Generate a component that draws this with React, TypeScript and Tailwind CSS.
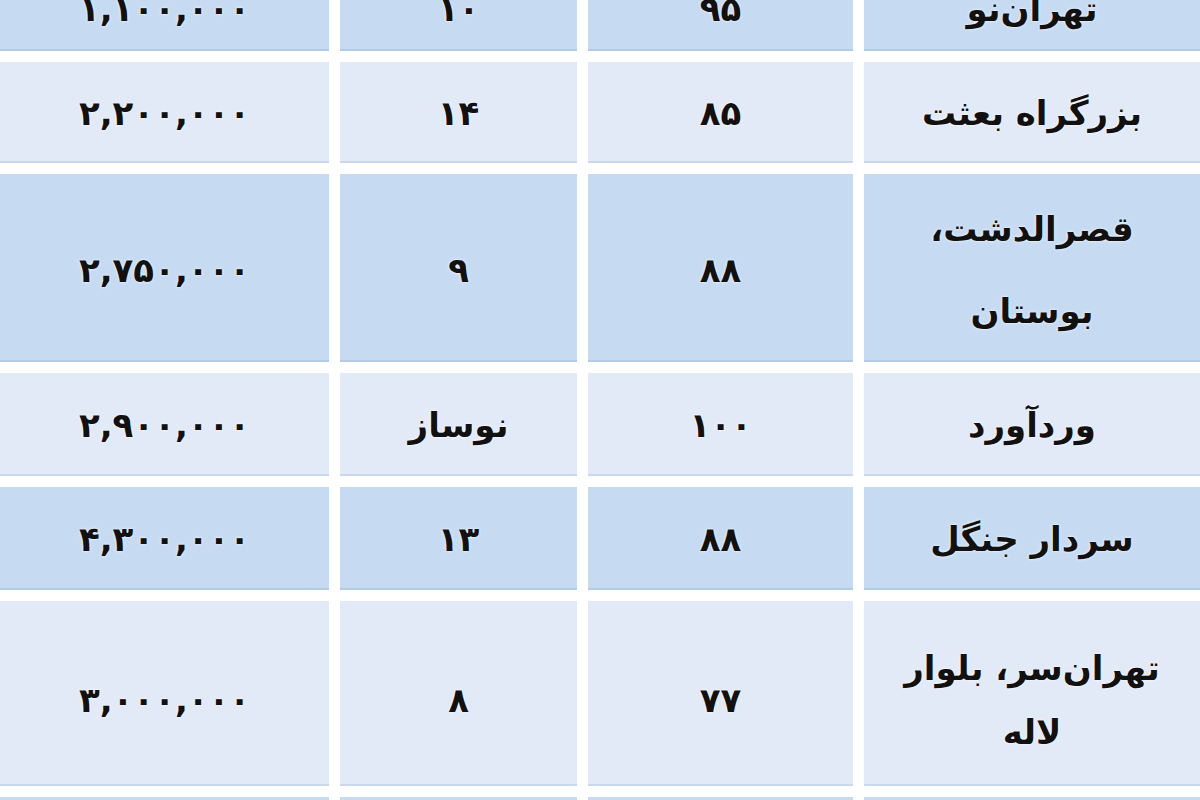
import React from 'react';

interface Row {
    cells: React.ReactNode[],
    height: string,
    pad: string,
    leading: string,
    tone: 'dark' | 'light'
}

const rows: Row[] = [
    {cells: ['تهران‌نو', '۹۵', '۱۰', '۱,۱۰۰,۰۰۰'], height: 'h-[87px]', pad: 'pt-[6px]', leading: 'leading-[1.9]', tone: 'dark'},
    {cells: ['بزرگراه بعثت', '۸۵', '۱۴', '۲,۲۰۰,۰۰۰'], height: 'h-[101px]', pad: 'pt-[4px]', leading: 'leading-[1.9]', tone: 'light'},
    {cells: [<>قصرالدشت،<br/>بوستان</>, '۸۸', '۹', '۲,۷۵۰,۰۰۰'], height: 'h-[188px]', pad: 'pt-[6px]', leading: 'leading-[82px]', tone: 'dark'},
    {cells: ['وردآورد', '۱۰۰', 'نوساز', '۲,۹۰۰,۰۰۰'], height: 'h-[103px]', pad: 'pt-[4px]', leading: 'leading-[1.9]', tone: 'light'},
    {cells: ['سردار جنگل', '۸۸', '۱۳', '۴,۳۰۰,۰۰۰'], height: 'h-[103px]', pad: 'pt-[4px]', leading: 'leading-[1.9]', tone: 'dark'},
    {cells: [<>تهران‌سر، بلوار<br/>لاله</>, '۷۷', '۸', '۳,۰۰۰,۰۰۰'], height: 'h-[185px]', pad: 'pt-[14px]', leading: 'leading-[64px]', tone: 'light'},
    {cells: ['', '', '', ''], height: 'h-[100px]', pad: '', leading: 'leading-[1.9]', tone: 'dark'},
];

const App: React.FC = () => {
    return (
        <div className="w-[1200px] h-[800px] overflow-hidden bg-white">
            <div dir="rtl"
                 className="-mt-[36px] flex flex-col gap-[11px] font-['DejaVu_Sans',sans-serif] font-bold text-[34px] text-[#111]">
                {rows.map((row, i) => (
                    <div key={i} className={`grid grid-cols-[336px_265px_237px_329px] gap-x-[11px] ${row.height}`}>
                        {row.cells.map((cell, j) => (
                            <div key={j}
                                 className={row.tone === 'dark'
                                     ? `flex items-center justify-center text-center ${row.leading} bg-[#c6dbf2] border-b-2 border-[#b4cbe6] [text-shadow:0_0_3px_#fff]`
                                     : `flex items-center justify-center text-center ${row.leading} bg-[#e2eaf7] border-b-2 border-[#cad8ec] [text-shadow:0_0_3px_#fff]`}>
                                <span className={row.pad}>{cell}</span>
                            </div>
                        ))}
                    </div>
                ))}
            </div>
        </div>
    );
};

export default App;
